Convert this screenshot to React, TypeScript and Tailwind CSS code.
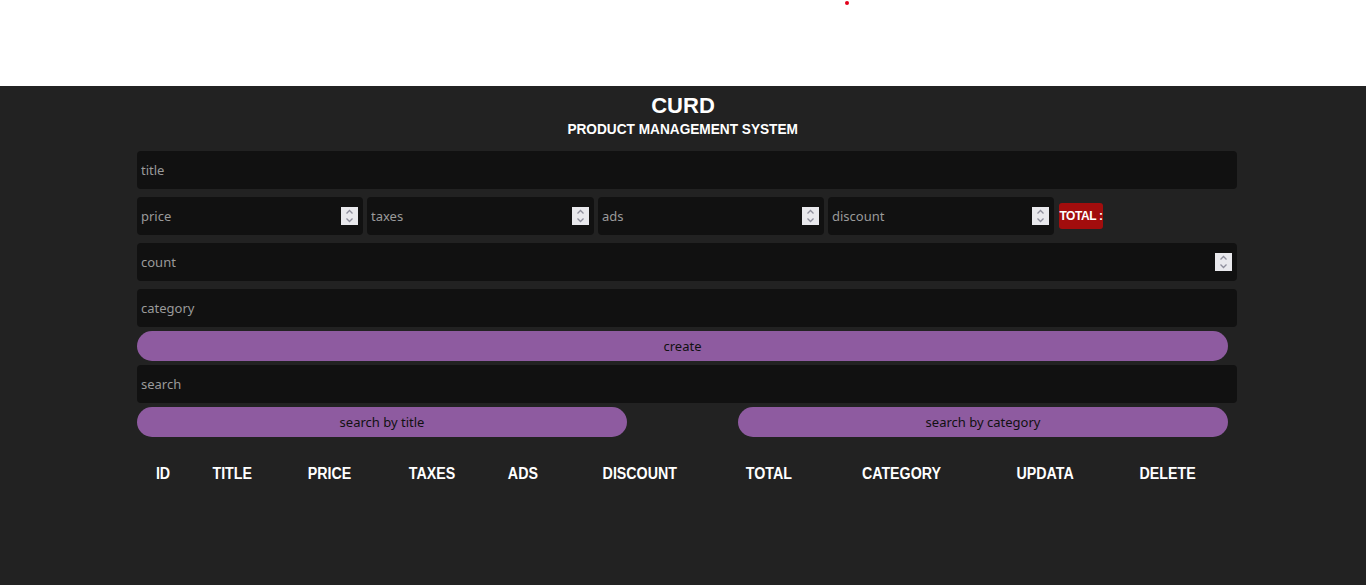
import React from "react";

const Spinner = () => (
    <span className="flex h-[18px] w-[17px] shrink-0 flex-col items-center justify-center bg-[#e9e9ed]">
        <svg width="9" height="14" viewBox="0 0 9 14" fill="none" stroke="#8f8f9d" strokeWidth="1.3">
            <path d="M1.5 4.5 L4.5 1.5 L7.5 4.5" />
            <path d="M1.5 9.5 L4.5 12.5 L7.5 9.5" />
        </svg>
    </span>
);

const Field = ({ placeholder, number, className = "" }: { placeholder: string; number?: boolean; className?: string }) => (
    <div className={`flex h-[38px] items-center rounded-[4px] bg-[#111111] pl-[4px] pr-[5px] ${className}`}>
        <input
            placeholder={placeholder}
            className="min-w-0 flex-1 bg-transparent pt-[2px] text-[13px] text-white outline-none placeholder:text-[#9a9a9a]"
        />
        {number && <Spinner />}
    </div>
);

const HEADERS: [string, string][] = [
    ["ID", "w-[51px]"],
    ["TITLE", "w-[88px]"],
    ["PRICE", "w-[106px]"],
    ["TAXES", "w-[100px]"],
    ["ADS", "w-[81px]"],
    ["DISCOUNT", "w-[154px]"],
    ["TOTAL", "w-[104px]"],
    ["CATEGORY", "w-[161px]"],
    ["UPDATA", "w-[127px]"],
    ["DELETE", "w-[118px]"],
];

export default function App() {
    return (
        <div className="min-h-[585px] bg-white font-['Noto_Sans',sans-serif]">
            {/* top white strip */}
            <div className="h-[86px] pl-[845px] pt-[1px]">
                <div className="h-[4px] w-[4px] rounded-full bg-[#e3001b]"></div>
            </div>

            <div className="h-[499px] bg-[#222222]">
                <div className="pt-[8px] text-center text-white font-['Liberation_Sans',sans-serif] font-bold">
                    <h1 className="text-[22px] leading-[24px]">CURD</h1>
                    <p className="mt-[2px] text-[15px] leading-[18px]">
                        <span className="inline-block scale-x-[0.91]">PRODUCT MANAGEMENT SYSTEM</span>
                    </p>
                </div>

                <div className="w-[1237px] pl-[137px]">
                    <div className="mt-[13px] flex flex-col">
                        <Field placeholder="title" />

                        <div className="mt-[8px] flex items-center gap-[4px]">
                            <Field placeholder="price" number className="w-[226px]" />
                            <Field placeholder="taxes" number className="w-[227px]" />
                            <Field placeholder="ads" number className="w-[226px]" />
                            <Field placeholder="discount" number className="w-[226px]" />
                            <span className="ml-[1px] flex h-[26px] w-[44px] items-center justify-center rounded-[3px] bg-[#a20d0d] text-[12px] font-bold tracking-[-0.4px] text-white font-['Liberation_Sans',sans-serif]">
                                TOTAL :
                            </span>
                        </div>

                        <Field placeholder="count" number className="mt-[8px]" />
                        <Field placeholder="category" className="mt-[8px]" />

                        <button className="mt-[4px] h-[30px] w-[1091px] rounded-full bg-[#8e5ba0] pt-[1px] text-[13px] text-[#111111]">
                            create
                        </button>

                        <Field placeholder="search" className="mt-[4px]" />

                        <div className="mt-[4px] flex justify-between pr-[9px]">
                            <button className="h-[30px] w-[490px] rounded-full bg-[#8e5ba0] pt-[1px] text-[13px] text-[#111111]">
                                search by title
                            </button>
                            <button className="h-[30px] w-[490px] rounded-full bg-[#8e5ba0] pt-[1px] text-[13px] text-[#111111]">
                                search by category
                            </button>
                        </div>
                    </div>

                    <div className="mt-[27px] flex font-['Liberation_Sans',sans-serif] text-[16px] leading-[20px] font-bold text-white">
                        {HEADERS.map(([h, w]) => (
                            <div key={h} className={`${w} text-center`}>
                                <span className="inline-block scale-x-[0.89]">{h}</span>
                            </div>
                        ))}
                    </div>
                </div>
            </div>
        </div>
    );
}
